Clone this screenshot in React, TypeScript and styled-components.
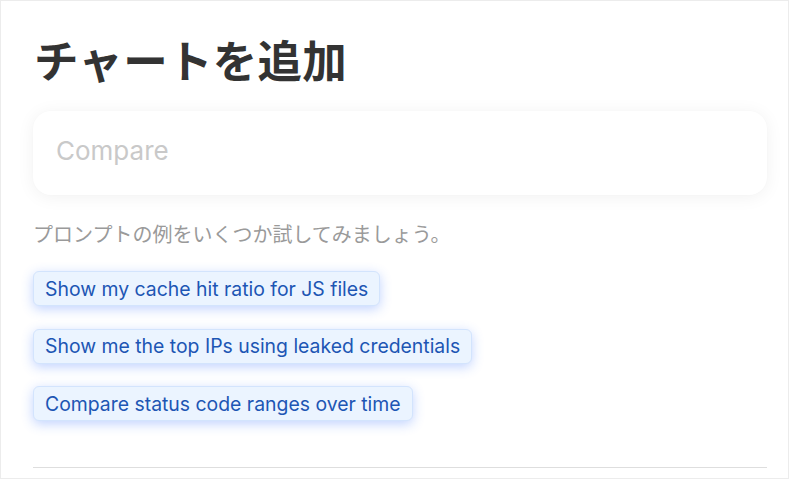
import React from 'react';
import styled, { createGlobalStyle } from 'styled-components';

const GlobalStyle = createGlobalStyle`
  html, body {
    margin: 0;
    padding: 0;
    background: #ffffff;
  }
  body {
    font-family: Inter, "Noto Sans CJK JP", sans-serif;
  }
`;

const prompts = [
  'Show my cache hit ratio for JS files',
  'Show me the top IPs using leaked credentials',
  'Compare status code ranges over time',
];

const App: React.FC = () => {
  return (
    <>
      <GlobalStyle />
      <Frame>
        <Title>チャートを追加</Title>
        <InputCard>
          <PromptInput placeholder="Compare" />
        </InputCard>
        <Hint>プロンプトの例をいくつか試してみましょう。</Hint>
        <ChipList>
          {prompts.map((p) => (
            <Chip key={p}>{p}</Chip>
          ))}
        </ChipList>
        <Divider />
      </Frame>
    </>
  );
};

const Frame = styled.div`
  box-sizing: border-box;
  width: 789px;
  height: 479px;
  border: 1px solid #ececec;
  background: #ffffff;
  padding: 26px 21px 0 32px;
  display: flex;
  flex-direction: column;
  overflow: hidden;
`;

const Title = styled.h1`
  margin: 0 0 0 1px;
  font-family: "Noto Sans CJK JP", sans-serif;
  font-size: 44.5px;
  font-weight: 600;
  line-height: 64px;
  color: #333333;
  letter-spacing: 0.3px;
`;

const InputCard = styled.div`
  margin-top: 20px;
  height: 84px;
  border-radius: 18px;
  background: #ffffff;
  box-shadow: 0 2px 18px rgba(0, 0, 0, 0.06), 0 0 2px rgba(0, 0, 0, 0.02);
  display: flex;
  align-items: center;
  padding: 0 23px;
`;

const PromptInput = styled.input`
  border: none;
  outline: none;
  background: transparent;
  width: 100%;
  font-family: Inter, "Noto Sans CJK JP", sans-serif;
  font-size: 26px;
  color: #333333;
  padding: 0 0 5px 0;
  &::placeholder {
    color: #c9c9c9;
  }
`;

const Hint = styled.p`
  margin: 24px 0 0 0;
  font-family: "Noto Sans CJK JP", sans-serif;
  font-size: 20px;
  line-height: 30px;
  color: #9a9a9a;
`;

const ChipList = styled.div`
  margin-top: 22px;
  display: flex;
  flex-direction: column;
  align-items: flex-start;
  gap: 22.5px;
`;

const Chip = styled.button`
  box-sizing: border-box;
  height: 35px;
  padding: 0 11px;
  border: 1px solid #d3e4fd;
  border-radius: 6px;
  background: #ebf4ff;
  box-shadow: 0 3px 12px rgba(50, 110, 255, 0.3);
  font-family: Inter, sans-serif;
  font-size: 19.4px;
  color: #1d56b4;
  cursor: pointer;
  white-space: nowrap;
`;

const Divider = styled.hr`
  margin: auto 0 10px 0;
  border: none;
  border-top: 1px solid #dedede;
  width: 100%;
`;

export default App;
